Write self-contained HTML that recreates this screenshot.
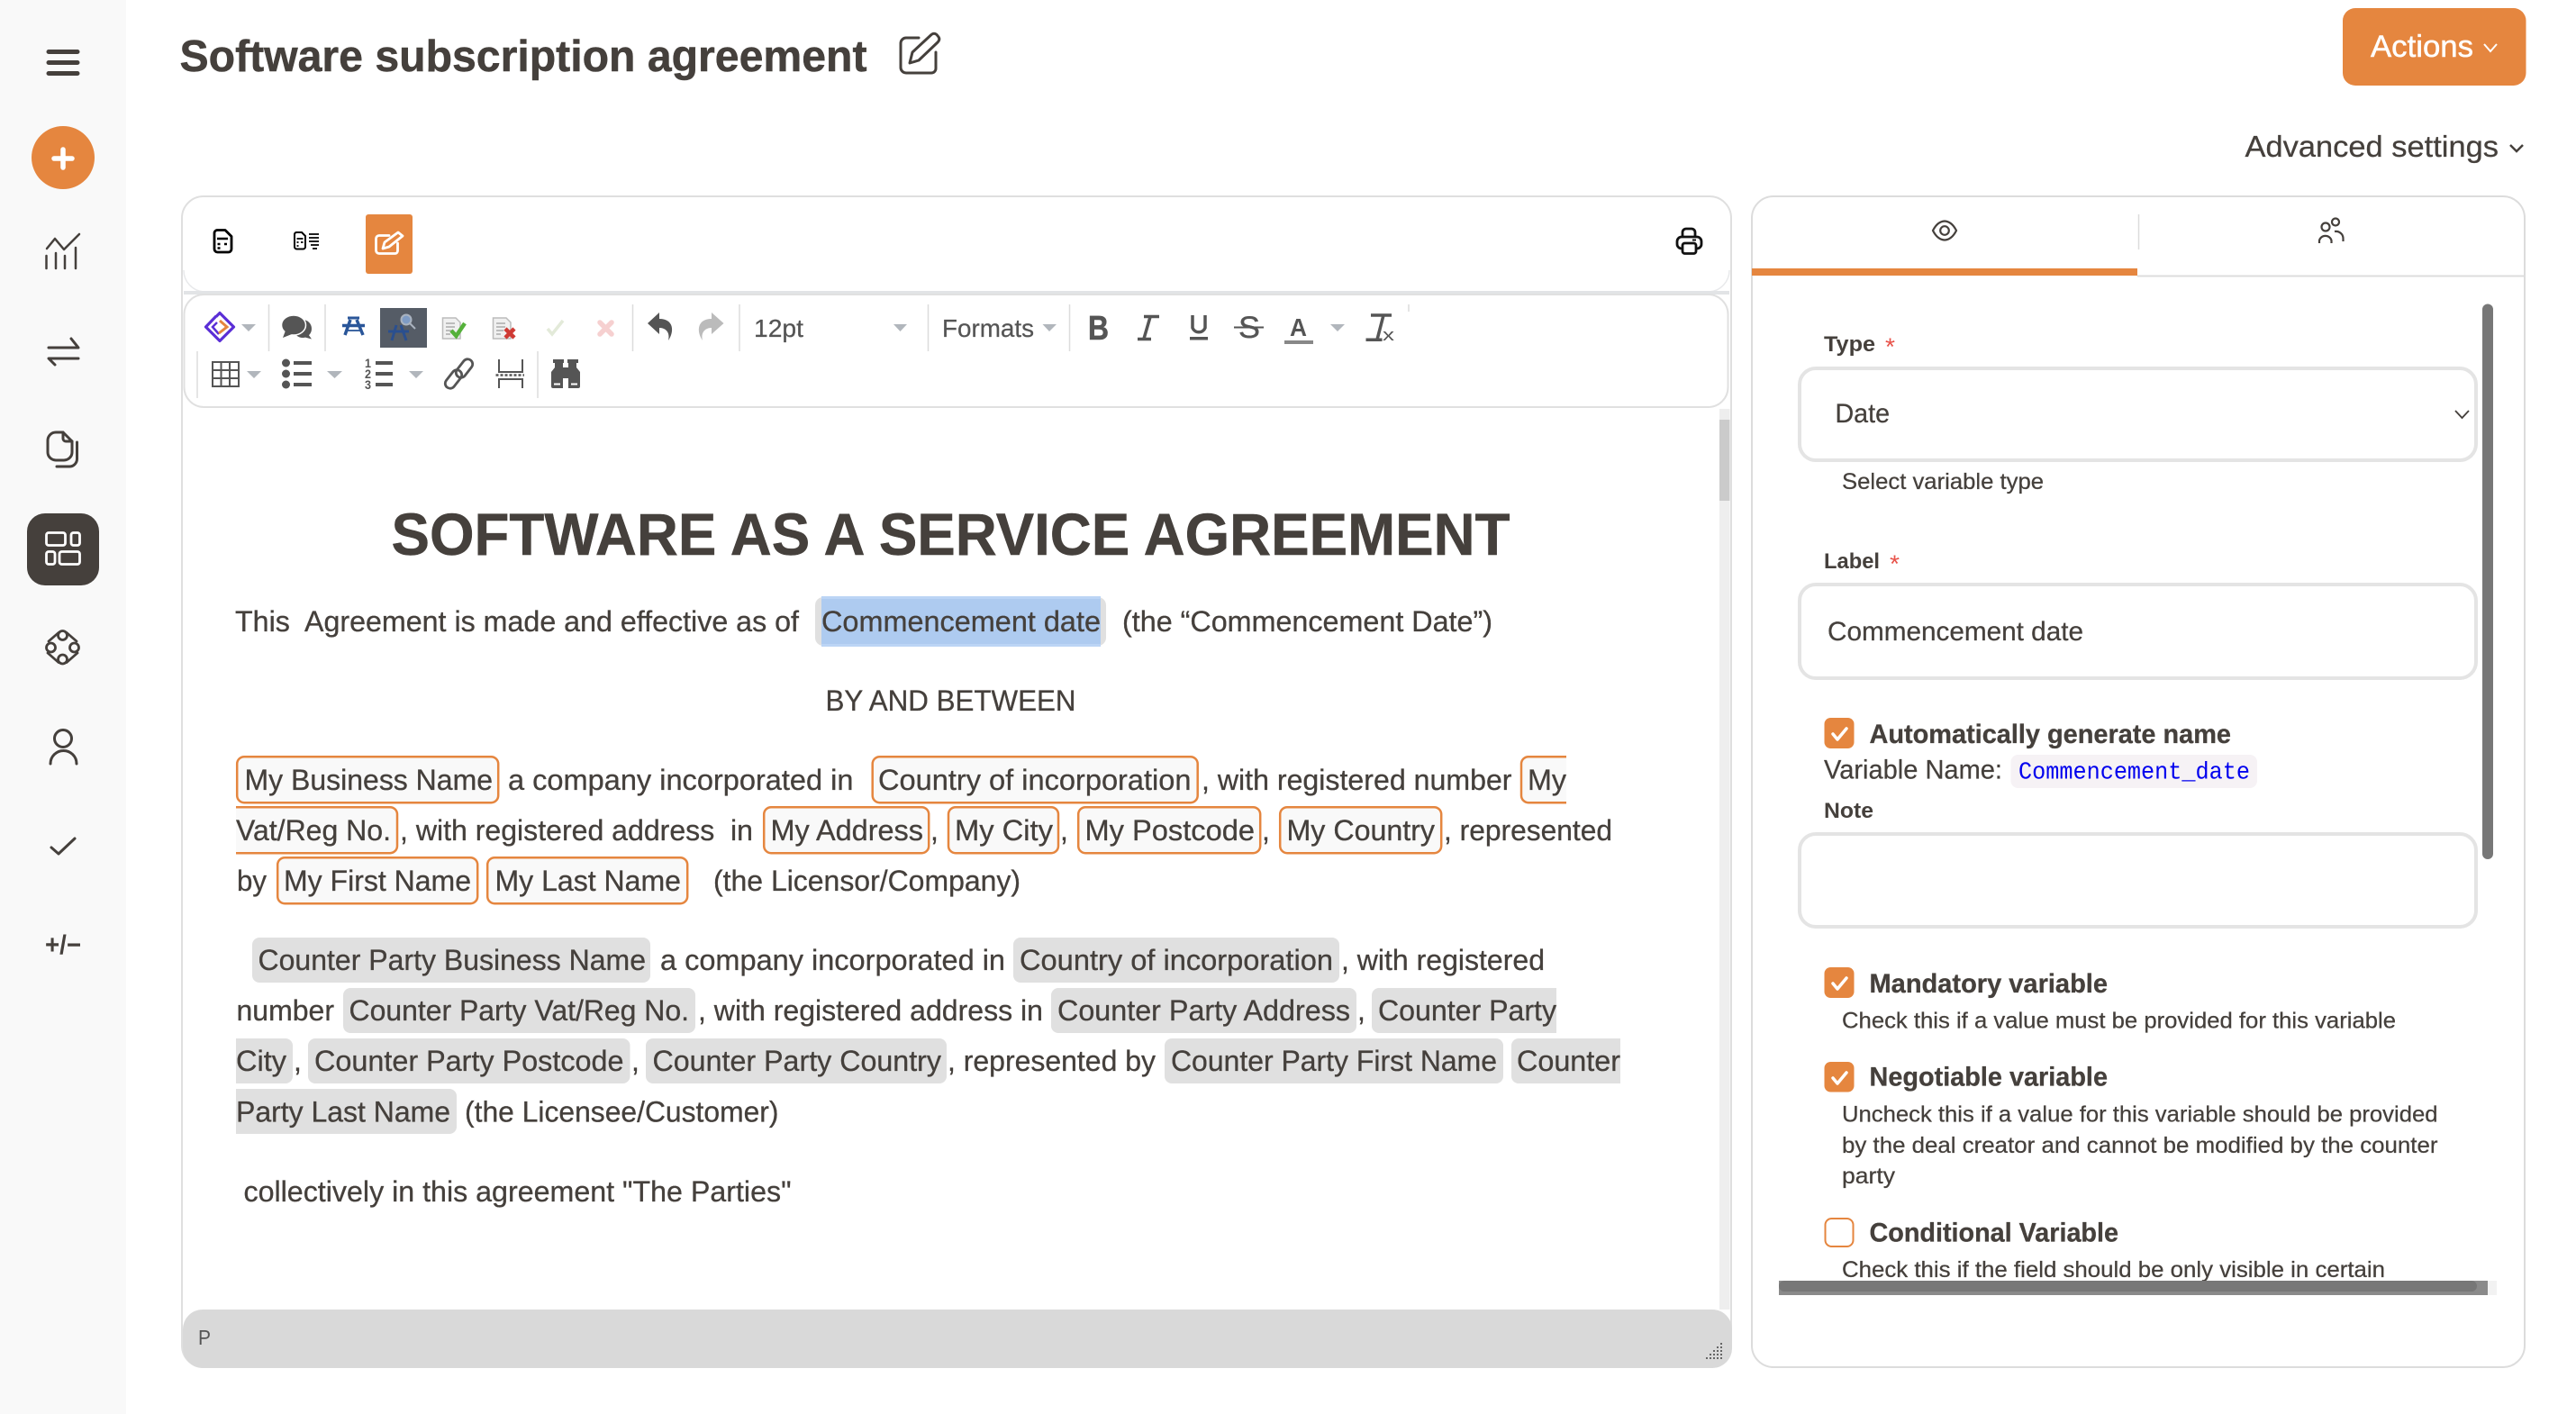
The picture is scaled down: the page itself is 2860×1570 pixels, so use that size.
<!DOCTYPE html>
<html lang="en"><head><meta charset="utf-8"><title>Software subscription agreement</title>
<style>
html,body{margin:0;padding:0;background:#fff}
svg{display:block}
text{font-family:"Liberation Sans",sans-serif;fill:#45403c;white-space:pre}
.b{font-size:32px;stroke:#45403c;stroke-width:.3}
.s{font-size:25px;stroke:#45403c;stroke-width:.25}
.l{font-size:24px;font-weight:700}
.h{font-size:30px;font-weight:700;stroke:#45403c;stroke-width:.3}
.ti{font-size:30px;stroke:#45403c;stroke-width:.25}
.tb{font-size:28px;fill:#555;stroke:#555;stroke-width:.25}
.ic{fill:none;stroke:#45403c;stroke-width:3;stroke-linecap:round;stroke-linejoin:round}
.op{fill:#f9f9f9;stroke:#e5863f;stroke-width:2.5}
.gp{fill:#e0e0e0}
.sep{stroke:#dcdcdc;stroke-width:1.5}
.car{fill:#b1b6bc}
.box{fill:#fff;stroke:#e4e4e4;stroke-width:4}
</style></head><body>
<svg xmlns="http://www.w3.org/2000/svg" width="2860" height="1570" viewBox="0 0 2860 1570">
<rect width="2860" height="1570" fill="#fff"/>
<rect width="140" height="1570" fill="#f9f9f9"/>

<!-- sidebar -->
<g class="ic" style="stroke-width:5"><path d="M54 57.500H86M54 69.500H86M54 81.500H86"/></g>
<circle cx="70" cy="175" r="35" fill="#e5863f"/>
<path d="M70 166V186M60 176H80" stroke="#fff" stroke-width="5.500" stroke-linecap="round"/>
<g class="ic" style="stroke-width:2.500"><path d="M52 276L61 265L71 277L88 260"/><path d="M51.500 284V298M62 281V298M72 284V298M84 275V298"/></g>
<g class="ic"><path d="M54 386H87L79 376"/><path d="M87 398H54L61 405"/></g>
<g class="ic"><path d="M62 480h8l10 10v12a9 9 0 0 1-9 9h-9a9 9 0 0 1-9-9v-13a9 9 0 0 1 9-9z"/><path d="M70 480v7a3 3 0 0 0 3 3h7"/><path d="M63 518h14a8.500 8.500 0 0 0 8.500-8.500V491"/></g>
<rect x="30" y="570" width="80" height="80" rx="20" fill="#45403c"/>
<g fill="none" stroke="#fff" stroke-width="2.800"><rect x="51.500" y="591.500" width="21" height="14" rx="2.500"/><rect x="79" y="591.500" width="9.500" height="14" rx="2.500"/><rect x="51.500" y="612.500" width="9.500" height="14" rx="2.500"/><rect x="66" y="612.500" width="22.500" height="14" rx="2.500"/></g>
<g class="ic" style="stroke-width:2.800"><circle cx="69.500" cy="705.500" r="5"/><circle cx="56.500" cy="719" r="5"/><circle cx="82.500" cy="719" r="5"/><circle cx="69.500" cy="732" r="5"/><path d="M65 702.500L54 712M74 702.500L85 712M53 725L65 735.500M86 725L74 735.500"/></g>
<g class="ic"><circle cx="70" cy="820" r="9.500"/><path d="M56 848a14.500 14.500 0 0 1 29 0"/></g>
<path class="ic" d="M57 941L65 948L83 931"/>
<text x="50" y="1059" font-size="30" font-weight="700" textLength="40" lengthAdjust="spacingAndGlyphs">+/−</text>

<!-- header -->
<text x="199.500" y="79" font-size="49" font-weight="700" stroke="#45403c" stroke-width=".5" textLength="763" lengthAdjust="spacingAndGlyphs">Software subscription agreement</text>
<g class="ic"><path d="M1020 42H1006a6 6 0 0 0-6 6v27a6 6 0 0 0 6 6h28a5 5 0 0 0 5-5V58"/><path d="M1010 70L1013 58L1034 38.500Q1037 36 1040 38.500L1042 41Q1044 44 1041 47L1020 67Z"/></g>
<rect x="2601" y="9" width="203.500" height="86" rx="14" fill="#e5863f"/>
<text x="2632" y="63" font-size="34" stroke="#fff" stroke-width=".5" style="fill:#fff" textLength="114" lengthAdjust="spacingAndGlyphs">Actions</text>
<path d="M2758 49L2765 57L2772 49" fill="none" stroke="#fff" stroke-width="2"/>
<text x="2492.500" y="174" font-size="33" stroke="#45403c" stroke-width=".25" textLength="281.500" lengthAdjust="spacingAndGlyphs">Advanced settings</text>
<path d="M2787 161L2794 168L2801 161" fill="none" stroke="#45403c" stroke-width="2.500"/>

<!-- editor panel -->
<rect x="202" y="218" width="1720" height="1300" rx="24" fill="#fff" stroke="#dfdfdf" stroke-width="2"/>
<path d="M204 300a24 24 0 0 0 22 24H1898a24 24 0 0 0 22-24" fill="none" stroke="#e8e9eb" stroke-width="1.500"/>
<rect x="204" y="323" width="1716" height="4" fill="#e2e4e6"/>
<rect x="204.500" y="327" width="1714" height="125" rx="22" fill="#fff" stroke="#e0e0e0" stroke-width="2"/>
<rect x="1909" y="454" width="11.500" height="1000" fill="#eeeeee"/>
<rect x="1909" y="466" width="11.500" height="90" fill="#cbcbcb"/>

<!-- doc mode icons -->
<g fill="none" stroke="#000" stroke-width="2.800" stroke-linejoin="round"><path d="M241 255.500h9l7 7v14a3.500 3.500 0 0 1-3.500 3.500h-12a3.500 3.500 0 0 1-3.500-3.500v-18a3.500 3.500 0 0 1 3-3z"/></g>
<path d="M241 265h12M241.500 271h3M249 271h3M241.500 275.500h3" stroke="#000" stroke-width="2.500"/>
<path d="M329 258h6l4 4v12a2.500 2.500 0 0 1-2.500 2.500h-7a2.500 2.500 0 0 1-2.500-2.500v-14a2.500 2.500 0 0 1 2-2z" fill="none" stroke="#000" stroke-width="2"/>
<path d="M329.500 265h7M329.500 269h2M334 269h2.500M329.500 273h2M343 260h11M343 264h11M343 268h11M345 272h9M347 276h5" stroke="#000" stroke-width="1.800"/>
<rect x="406" y="238" width="52" height="66" rx="3" fill="#e5863f"/>
<g fill="none" stroke="#fff" stroke-width="2.800" stroke-linecap="round" stroke-linejoin="round"><path d="M432 261.500H421a3.500 3.500 0 0 0-3.500 3.500v13a3.500 3.500 0 0 0 3.500 3.500h17.500a3 3 0 0 0 3-3V270"/><path d="M425 276L427 269L442 258L447 262L432 274Z"/></g>
<g fill="none" stroke="#111" stroke-width="2.800" stroke-linejoin="round"><path d="M1868 264v-6a4 4 0 0 1 4-4h6a4 4 0 0 1 4 4v6"/><rect x="1862" y="263" width="27" height="13" rx="5"/><rect x="1868" y="270" width="15" height="11.500" rx="2.500" fill="#fff"/></g>
<path d="M1879 266.500h4" stroke="#111" stroke-width="2"/>

<!-- tinymce toolbar row 1 -->
<path d="M240 351.500L244 347.500L259.500 363L244 378.500L228.500 363L240 351" fill="none" stroke="#5b2fd6" stroke-width="3.200" stroke-linejoin="round"/>
<path d="M241 358L236 363L243 371" fill="none" stroke="#5b2fd6" stroke-width="2.500"/>
<path d="M244 356L252 363L243 370" fill="none" stroke="#e5863f" stroke-width="3"/>
<path class="car" d="M268 360H284L276 368Z"/>
<line class="sep" x1="298.500" y1="338" x2="298.500" y2="390"/>
<circle cx="336" cy="365" r="10" fill="#555"/>
<path d="M340 368L346 376.500L333 373Z" fill="#555"/>
<ellipse cx="326" cy="361" rx="13.500" ry="11" fill="#555" stroke="#fff" stroke-width="1.500"/>
<path d="M317 367L314 375L324 371Z" fill="#555"/>
<g fill="none" stroke="#2a5699"><path d="M389 355L383 372M396 355L403 372" stroke-width="3.500"/><path d="M386 353H399" stroke-width="3"/><path d="M380 361.500H405" stroke-width="3.500"/><path d="M386 367H400" stroke-width="1.800"/></g>
<line class="sep" x1="361" y1="338" x2="361" y2="390"/>
<rect x="422" y="342" width="52" height="44" fill="#555c66"/>
<g fill="none"><path d="M440 361L435 378M445 361L451 378" stroke="#2a4f8f" stroke-width="3"/><path d="M431 368H454" stroke="#2a4f8f" stroke-width="3"/><circle cx="451" cy="355" r="5.500" stroke="#aab3bf" stroke-width="2" fill="#7f9cc5"/><path d="M455 359L461 365" stroke="#aab3bf" stroke-width="2"/></g>
<path d="M491.500 353H506L511 358V376H491.500Z" fill="#f0f0f0" stroke="#bbb" stroke-width="1.500"/>
<path d="M495 359H505M495 363H505M495 367H503M495 371H500" stroke="#aaa" stroke-width="1.500"/>
<path d="M501 367L506.500 373L516 359" fill="none" stroke="#55b13b" stroke-width="4.500"/>
<path d="M547.500 353H562L567 358V376H547.500Z" fill="#f0f0f0" stroke="#bbb" stroke-width="1.500"/>
<path d="M551 359H561M551 363H561M551 367H559M551 371H556" stroke="#aaa" stroke-width="1.500"/>
<path d="M561 365L571 375M571 365L561 375" stroke="#cf3a34" stroke-width="4.500"/>
<path d="M608 365L613 371L625 356" fill="none" stroke="#e3ead9" stroke-width="3.500"/>
<path d="M666 358L679 371M679 358L666 371" stroke="#f6d0d0" stroke-width="5.500" stroke-linecap="round"/>
<line class="sep" x1="702.500" y1="338" x2="702.500" y2="390"/>
<path d="M732 347L719 359L732 371V364C740 364 744 370 742 378C749 368 748 354 732 354Z" fill="#555"/>
<path d="M790 347L803.500 359L790 371V364C782 364 778 370 780 378C773 368 774 354 790 354Z" fill="#bbb"/>
<line class="sep" x1="821" y1="338" x2="821" y2="390"/>
<text class="tb" x="837" y="374" textLength="55" lengthAdjust="spacingAndGlyphs">12pt</text>
<path class="car" d="M992 360H1007L999.500 368Z"/>
<line class="sep" x1="1030.500" y1="338" x2="1030.500" y2="390"/>
<text class="tb" x="1046" y="374" textLength="102" lengthAdjust="spacingAndGlyphs">Formats</text>
<path class="car" d="M1157.500 360H1173L1165 368Z"/>
<line class="sep" x1="1187.500" y1="338" x2="1187.500" y2="390"/>
<text x="1208" y="377" font-size="38" font-weight="700" stroke="#555" stroke-width=".6" style="fill:#555" textLength="23" lengthAdjust="spacingAndGlyphs">B</text>
<path d="M1277 352L1270 376M1270 351.500H1287M1263 376.500H1278" fill="none" stroke="#555" stroke-width="3.500"/>
<path d="M1324 350V364a7.500 7.500 0 0 0 14 0V350" fill="none" stroke="#555" stroke-width="3.500"/><rect x="1321" y="374" width="20" height="3.500" fill="#555"/>
<text x="1375" y="375" font-size="34" stroke="#555" stroke-width=".4" style="fill:#555" textLength="24" lengthAdjust="spacingAndGlyphs">S</text>
<path d="M1370 363.500H1403" stroke="#555" stroke-width="2"/>
<text x="1432" y="373" font-size="28" font-weight="700" style="fill:#555" textLength="19" lengthAdjust="spacingAndGlyphs">A</text>
<rect x="1426" y="378" width="32" height="4" fill="#888"/>
<path class="car" d="M1477 360H1493L1485 368Z"/>
<path d="M1536 350L1529 377M1522 350H1545" fill="none" stroke="#555" stroke-width="3.500"/><rect x="1516.500" y="375.500" width="18" height="3.500" fill="#555"/>
<text x="1535" y="378" font-size="18" style="fill:#555" textLength="13" lengthAdjust="spacingAndGlyphs">x</text>
<line class="sep" x1="1564" y1="338" x2="1564" y2="346"/>

<!-- toolbar row 2 -->
<line class="sep" x1="219" y1="390" x2="219" y2="442"/>
<g fill="none" stroke="#555" stroke-width="2"><rect x="236" y="402" width="29" height="27"/><path d="M245.500 402V429M255 402V429M236 411H265M236 420H265"/></g>
<path class="car" d="M274 412H290L282 420Z"/>
<g fill="#555"><circle cx="317.500" cy="403" r="4.500"/><circle cx="317.500" cy="415" r="4.500"/><circle cx="317.500" cy="427" r="4.500"/><rect x="326" y="401" width="20" height="4"/><rect x="326" y="413" width="20" height="4"/><rect x="326" y="425" width="20" height="4"/></g>
<path class="car" d="M363 412H380L371.500 420Z"/>
<g><text x="405" y="408" font-size="14" font-weight="700" style="fill:#555" textLength="7" lengthAdjust="spacingAndGlyphs">1</text><text x="405" y="420" font-size="14" font-weight="700" style="fill:#555" textLength="7" lengthAdjust="spacingAndGlyphs">2</text><text x="405" y="432" font-size="14" font-weight="700" style="fill:#555" textLength="7" lengthAdjust="spacingAndGlyphs">3</text></g>
<g fill="#555"><rect x="417" y="401" width="19" height="4"/><rect x="417" y="413" width="19" height="4"/><rect x="417" y="425" width="19" height="4"/></g>
<path class="car" d="M454 412H470L462 420Z"/>
<g fill="none" stroke="#555" stroke-width="2.800"><rect x="510" y="397.500" width="11" height="23" rx="5.500" transform="rotate(38 515.500 409)"/><rect x="498" y="409.500" width="11" height="23" rx="5.500" transform="rotate(38 503.500 421)"/></g>
<g fill="none" stroke="#555" stroke-width="2"><path d="M554 399V413H580V399M554 431V421H580V431"/><path d="M550.500 416.500H582" stroke-dasharray="3 2" stroke-width="2.500"/></g>
<line class="sep" x1="597" y1="390" x2="597" y2="442"/>
<path d="M614 399H626V403H625V431H614Q612 431 612 429V413L616 408V403H614Z" fill="#555"/>
<path d="M642 399H630V403H631V431H642Q644 431 644 429V413L640 408V403H642Z" fill="#555"/>
<rect x="625" y="408" width="6" height="12" fill="#555"/>
<path d="M615 426.500H622M634 426.500H641" stroke="#fff" stroke-width="2"/>

<!-- document -->
<text x="434.500" y="616" font-size="66" font-weight="700" stroke="#45403c" stroke-width=".5" textLength="1242" lengthAdjust="spacingAndGlyphs">SOFTWARE AS A SERVICE AGREEMENT</text>
<text class="b" x="261" y="701" textLength="626" lengthAdjust="spacingAndGlyphs">This  Agreement is made and effective as of</text>
<rect x="905" y="663" width="323" height="54" rx="9" fill="#e0e0e0"/>
<rect x="912" y="662" width="310" height="56" fill="#bcd5f5"/>
<rect x="912" y="665" width="310" height="50" fill="#aecbf0"/>
<text class="b" x="912" y="701" textLength="310" lengthAdjust="spacingAndGlyphs">Commencement date</text>
<text class="b" x="1246" y="701" textLength="411" lengthAdjust="spacingAndGlyphs">(the “Commencement Date”)</text>
<text class="b" x="916.500" y="789" textLength="278" lengthAdjust="spacingAndGlyphs">BY AND BETWEEN</text>

<!-- orange pills -->
<rect class="op" x="263.200" y="840.200" width="290" height="51" rx="8"/>
<text class="b" x="271.500" y="877" textLength="275.500" lengthAdjust="spacingAndGlyphs">My Business Name</text>
<text class="b" x="564" y="877" textLength="383.500" lengthAdjust="spacingAndGlyphs">a company incorporated in</text>
<rect class="op" x="968.700" y="840.200" width="361" height="51" rx="8"/>
<text class="b" x="975" y="877" textLength="347.500" lengthAdjust="spacingAndGlyphs">Country of incorporation</text>
<text class="b" x="1334" y="877" textLength="344.500" lengthAdjust="spacingAndGlyphs">, with registered number</text>
<path class="op" d="M1739 840.200H1697a8 8 0 0 0-8 8V883a8 8 0 0 0 8 8.200H1739"/>
<text class="b" x="1696" y="877" textLength="43" lengthAdjust="spacingAndGlyphs">My</text>

<path class="op" d="M262 896.200H433a8 8 0 0 1 8 8V939a8 8 0 0 1-8 8.200H262"/>
<text class="b" x="262" y="933" textLength="172" lengthAdjust="spacingAndGlyphs">Vat/Reg No.</text>
<text class="b" x="444" y="933" textLength="392" lengthAdjust="spacingAndGlyphs">, with registered address  in</text>
<rect class="op" x="848.200" y="896.200" width="183" height="51" rx="8"/>
<text class="b" x="855.500" y="933" textLength="169.500" lengthAdjust="spacingAndGlyphs">My Address</text>
<text class="b" x="1033" y="933">,</text>
<rect class="op" x="1053" y="896.200" width="122" height="51" rx="8"/>
<text class="b" x="1060" y="933" textLength="109" lengthAdjust="spacingAndGlyphs">My City</text>
<text class="b" x="1177" y="933">,</text>
<rect class="op" x="1197.200" y="896.200" width="202" height="51" rx="8"/>
<text class="b" x="1204.500" y="933" textLength="188.500" lengthAdjust="spacingAndGlyphs">My Postcode</text>
<text class="b" x="1401" y="933">,</text>
<rect class="op" x="1421.200" y="896.200" width="179" height="51" rx="8"/>
<text class="b" x="1428.500" y="933" textLength="164.500" lengthAdjust="spacingAndGlyphs">My Country</text>
<text class="b" x="1603" y="933" textLength="187" lengthAdjust="spacingAndGlyphs">, represented</text>

<text class="b" x="263" y="989" textLength="33" lengthAdjust="spacingAndGlyphs">by</text>
<rect class="op" x="308.200" y="952.200" width="222" height="51" rx="8"/>
<text class="b" x="315" y="989" textLength="208" lengthAdjust="spacingAndGlyphs">My First Name</text>
<rect class="op" x="541.200" y="952.200" width="222" height="51" rx="8"/>
<text class="b" x="549.500" y="989" textLength="206.500" lengthAdjust="spacingAndGlyphs">My Last Name</text>
<text class="b" x="792" y="989" textLength="341" lengthAdjust="spacingAndGlyphs">(the Licensor/Company)</text>

<!-- grey pills -->
<rect class="gp" x="280" y="1041" width="442" height="50" rx="8"/>
<text class="b" x="286.500" y="1077" textLength="430.500" lengthAdjust="spacingAndGlyphs">Counter Party Business Name</text>
<text class="b" x="733" y="1077" textLength="383" lengthAdjust="spacingAndGlyphs">a company incorporated in</text>
<rect class="gp" x="1125" y="1041" width="362" height="50" rx="8"/>
<text class="b" x="1132" y="1077" textLength="348" lengthAdjust="spacingAndGlyphs">Country of incorporation</text>
<text class="b" x="1489" y="1077" textLength="226" lengthAdjust="spacingAndGlyphs">, with registered</text>

<text class="b" x="262.500" y="1133" textLength="108.500" lengthAdjust="spacingAndGlyphs">number</text>
<rect class="gp" x="381" y="1097" width="391" height="50" rx="8"/>
<text class="b" x="387.500" y="1133" textLength="377.500" lengthAdjust="spacingAndGlyphs">Counter Party Vat/Reg No.</text>
<text class="b" x="775" y="1133" textLength="383" lengthAdjust="spacingAndGlyphs">, with registered address in</text>
<rect class="gp" x="1167" y="1097" width="339" height="50" rx="8"/>
<text class="b" x="1174" y="1133" textLength="325" lengthAdjust="spacingAndGlyphs">Counter Party Address</text>
<text class="b" x="1507" y="1133">,</text>
<path class="gp" d="M1728 1097H1531a8 8 0 0 0-8 8V1139a8 8 0 0 0 8 8H1728Z"/>
<text class="b" x="1530" y="1133" textLength="198" lengthAdjust="spacingAndGlyphs">Counter Party</text>

<path class="gp" d="M262 1153H317a8 8 0 0 1 8 8V1195a8 8 0 0 1-8 8H262Z"/>
<text class="b" x="262" y="1189" textLength="56" lengthAdjust="spacingAndGlyphs">City</text>
<text class="b" x="326" y="1189">,</text>
<rect class="gp" x="342" y="1153" width="357.500" height="50" rx="8"/>
<text class="b" x="349" y="1189" textLength="343.500" lengthAdjust="spacingAndGlyphs">Counter Party Postcode</text>
<text class="b" x="701" y="1189">,</text>
<rect class="gp" x="717" y="1153" width="334" height="50" rx="8"/>
<text class="b" x="724.500" y="1189" textLength="320.500" lengthAdjust="spacingAndGlyphs">Counter Party Country</text>
<text class="b" x="1052" y="1189" textLength="231" lengthAdjust="spacingAndGlyphs">, represented by</text>
<rect class="gp" x="1293" y="1153" width="376" height="50" rx="8"/>
<text class="b" x="1300" y="1189" textLength="362" lengthAdjust="spacingAndGlyphs">Counter Party First Name</text>
<path class="gp" d="M1799 1153H1686a8 8 0 0 0-8 8V1195a8 8 0 0 0 8 8H1799Z"/>
<text class="b" x="1684" y="1189" textLength="115" lengthAdjust="spacingAndGlyphs">Counter</text>

<path class="gp" d="M262 1209H499a8 8 0 0 1 8 8V1251a8 8 0 0 1-8 8H262Z"/>
<text class="b" x="262" y="1245.500" textLength="238" lengthAdjust="spacingAndGlyphs">Party Last Name</text>
<text class="b" x="516" y="1245.500" textLength="348.500" lengthAdjust="spacingAndGlyphs">(the Licensee/Customer)</text>
<text class="b" x="270.500" y="1334" textLength="608" lengthAdjust="spacingAndGlyphs">collectively in this agreement "The Parties"</text>

<!-- status bar -->
<rect x="203" y="1454" width="1720" height="65" rx="22" fill="#d9d9d9"/>
<text x="220" y="1493" font-size="23" style="fill:#555" textLength="14" lengthAdjust="spacingAndGlyphs">P</text>
<g fill="#666"><rect x="1910" y="1491" width="2" height="2"/><rect x="1906" y="1495" width="2" height="2"/><rect x="1910" y="1495" width="2" height="2"/><rect x="1902" y="1499" width="2" height="2"/><rect x="1906" y="1499" width="2" height="2"/><rect x="1910" y="1499" width="2" height="2"/><rect x="1898" y="1503" width="2" height="2"/><rect x="1902" y="1503" width="2" height="2"/><rect x="1906" y="1503" width="2" height="2"/><rect x="1910" y="1503" width="2" height="2"/><rect x="1894" y="1507" width="2" height="2"/><rect x="1898" y="1507" width="2" height="2"/><rect x="1902" y="1507" width="2" height="2"/><rect x="1906" y="1507" width="2" height="2"/><rect x="1910" y="1507" width="2" height="2"/></g>

<!-- right panel -->
<rect x="1945" y="218" width="858" height="1300" rx="24" fill="#fff" stroke="#dcdcdc" stroke-width="2"/>
<rect x="1945" y="298" width="428" height="8" fill="#e5863f"/>
<rect x="2373" y="305.500" width="429" height="2" fill="#dcdcdc"/>
<line x1="2374.500" y1="238" x2="2374.500" y2="277" stroke="#dcdcdc" stroke-width="1.500"/>
<path d="M2146 256Q2151 246 2159 245.500Q2167 246 2172 256Q2167 266 2159 266.500Q2151 266 2146 256Z" fill="none" stroke="#45403c" stroke-width="2.200"/>
<circle cx="2159" cy="256" r="4.800" fill="none" stroke="#45403c" stroke-width="2.200"/>
<g fill="none" stroke="#45403c" stroke-width="2.200"><circle cx="2593" cy="246.500" r="4"/><circle cx="2582" cy="252" r="4.500"/><path d="M2575 270V267a7 7 0 0 1 13.500 0V270"/><path d="M2592 257a8 8 0 0 1 9.500 8V268"/></g>
<rect x="2756" y="337.500" width="12" height="616.500" rx="6" fill="#777"/>

<text class="l" x="2025" y="390" textLength="57" lengthAdjust="spacingAndGlyphs">Type</text>
<text x="2093" y="395" font-size="27" style="fill:#e8534a" textLength="11" lengthAdjust="spacingAndGlyphs" dy="-1">*</text>
<rect class="box" x="1998" y="409" width="751" height="102" rx="18"/>
<text class="ti" x="2037.500" y="469" textLength="60.500" lengthAdjust="spacingAndGlyphs">Date</text>
<path d="M2726 456L2733.500 464L2741 456" fill="none" stroke="#45403c" stroke-width="1.800"/>
<text class="s" x="2045" y="543" textLength="224" lengthAdjust="spacingAndGlyphs">Select variable type</text>

<text class="l" x="2025" y="631" textLength="62" lengthAdjust="spacingAndGlyphs">Label</text>
<text x="2098" y="636" font-size="27" style="fill:#e8534a" textLength="11" lengthAdjust="spacingAndGlyphs" dy="-1">*</text>
<rect class="box" x="1998" y="649" width="751" height="104" rx="18"/>
<text class="ti" x="2029" y="711" textLength="284" lengthAdjust="spacingAndGlyphs">Commencement date</text>

<rect x="2025.500" y="797" width="33" height="34" rx="7" fill="#e5863f"/>
<path d="M2035 815L2040 821L2050 809" fill="none" stroke="#fff" stroke-width="3.500" stroke-linecap="round" stroke-linejoin="round"/>
<text class="h" x="2075.500" y="825" textLength="401.500" lengthAdjust="spacingAndGlyphs">Automatically generate name</text>
<text class="ti" x="2025" y="864.500" textLength="198" lengthAdjust="spacingAndGlyphs">Variable Name:</text>
<rect x="2232.500" y="838" width="273.500" height="37" rx="8" fill="#f6f2f5"/>
<text x="2241" y="864.500" font-size="26.500" style="font-family:'Liberation Mono',monospace;fill:#0000ee" textLength="257" lengthAdjust="spacingAndGlyphs">Commencement_date</text>
<text class="l" x="2025" y="908" textLength="55" lengthAdjust="spacingAndGlyphs">Note</text>
<rect class="box" x="1998" y="926" width="751" height="103" rx="18"/>

<rect x="2025.500" y="1074" width="33" height="34" rx="7" fill="#e5863f"/>
<path d="M2035 1092L2040 1098L2050 1086" fill="none" stroke="#fff" stroke-width="3.500" stroke-linecap="round" stroke-linejoin="round"/>
<text class="h" x="2075.500" y="1102" textLength="264.500" lengthAdjust="spacingAndGlyphs">Mandatory variable</text>
<text class="s" x="2045" y="1141.500" textLength="615" lengthAdjust="spacingAndGlyphs">Check this if a value must be provided for this variable</text>

<rect x="2025.500" y="1179" width="33" height="33.500" rx="7" fill="#e5863f"/>
<path d="M2035 1197L2040 1203L2050 1191" fill="none" stroke="#fff" stroke-width="3.500" stroke-linecap="round" stroke-linejoin="round"/>
<text class="h" x="2075.500" y="1205.500" textLength="264.500" lengthAdjust="spacingAndGlyphs">Negotiable variable</text>
<text class="s" x="2045" y="1245.500" textLength="661.500" lengthAdjust="spacingAndGlyphs">Uncheck this if a value for this variable should be provided</text>
<text class="s" x="2045" y="1280" textLength="661.500" lengthAdjust="spacingAndGlyphs">by the deal creator and cannot be modified by the counter</text>
<text class="s" x="2045" y="1314" textLength="59" lengthAdjust="spacingAndGlyphs">party</text>

<rect x="2026.500" y="1353" width="31" height="31" rx="7" fill="#fff" stroke="#e5863f" stroke-width="2"/>
<text class="h" x="2075.500" y="1378.500" textLength="276.500" lengthAdjust="spacingAndGlyphs">Conditional Variable</text>
<text class="s" x="2045" y="1418" textLength="603" lengthAdjust="spacingAndGlyphs">Check this if the field should be only visible in certain</text>
<rect x="1975" y="1422" width="787" height="16" fill="#8a8a8a"/>
<rect x="2762" y="1422" width="10" height="16" fill="#f2f2f2"/>
<rect x="1975" y="1422" width="775" height="12" rx="6" fill="#777"/>
</svg>
</body></html>
